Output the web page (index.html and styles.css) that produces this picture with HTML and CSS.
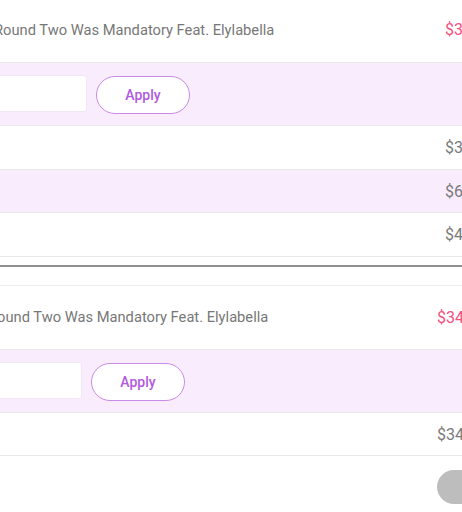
FILE: index.html
```html
<!DOCTYPE html>
<html lang="en">
<head>
<meta charset="utf-8">
<title>Cart</title>
<link rel="stylesheet" href="styles.css">
</head>
<body>
<div class="page">
  <section class="cart cart-a">
    <div class="row row-title">
      <div class="label">Round Two Was Mandatory Feat. Elylabella</div>
      <div class="price price-pink">$34.99</div>
    </div>
    <div class="row row-coupon">
      <div class="coupon">
        <input class="coupon-input" type="text">
        <button class="apply">Apply</button>
      </div>
    </div>
    <div class="row row-sum h43">
      <div class="label"></div>
      <div class="price">$34.99</div>
    </div>
    <div class="row row-sum row-alt h42">
      <div class="label"></div>
      <div class="price">$6.99</div>
    </div>
    <div class="row row-sum h43">
      <div class="label"></div>
      <div class="price">$41.98</div>
    </div>
  </section>

  <hr class="divider">

  <section class="cart cart-b">
    <div class="row row-title title-b">
      <div class="label">Round Two Was Mandatory Feat. Elylabella</div>
      <div class="price price-pink">$34.99</div>
    </div>
    <div class="row row-coupon">
      <div class="coupon">
        <input class="coupon-input" type="text">
        <button class="apply">Apply</button>
      </div>
    </div>
    <div class="row row-sum h42">
      <div class="label"></div>
      <div class="price">$34.99</div>
    </div>
    <div class="actions">
      <div class="label"></div>
      <button class="checkout">Checkout</button>
    </div>
  </section>
</div>
</body>
</html>
```

FILE: styles.css
```css
* { box-sizing: border-box; }

html, body {
  margin: 0;
  padding: 0;
  background: #ffffff;
  overflow: hidden;
}

body {
  width: 462px;
  height: 512px;
  font-family: Roboto, "Noto Sans", Arial, sans-serif;
  color: #767676;
}

.page {
  width: 462px;
  overflow: hidden;
}

.cart {
  width: 640px;
}

.cart-a { margin-left: -6px; --label-w: 451px; }
.cart-b { margin-left: -12px; --label-w: 449px; border-top: 1px solid #eeeeee; }

.row {
  display: flex;
  align-items: center;
  border-bottom: 1px solid #e9e9e9;
}

.label {
  flex: 0 0 var(--label-w);
  font-size: 14.7px;
  color: #777777;
  white-space: nowrap;
}

.price {
  font-size: 16px;
  color: #7a7a7a;
  white-space: nowrap;
}

.price-pink { color: #f4517e; }

.row-title { height: 63px; padding-bottom: 3px; }
.title-b { height: 64px; padding-bottom: 1px; }

.row-coupon {
  height: 63px;
  background: #f9edfd;
}

.row-alt { background: #f9edfd; }

.h43 { height: 44px; }
.h42 { height: 43px; }

.coupon {
  display: flex;
  align-items: center;
  gap: 9px;
}

.coupon-input {
  width: 93px;
  height: 37px;
  margin: 0;
  border: 1px solid #f1e6f5;
  border-radius: 3px;
  background: #ffffff;
  margin-top: -1px;
}

.cart-b .coupon-input { width: 94px; }

.apply {
  width: 94px;
  height: 38px;
  margin: 1px 0 0;
  border: 1.5px solid #c98ae9;
  border-radius: 19px;
  background: #ffffff;
  color: #b15ae0;
  font-family: Roboto, "Noto Sans", Arial, sans-serif;
  font-size: 14px;
  font-weight: 500;
  padding: 0;
}

.divider {
  margin: 8px 0 18px;
  border: 0;
  height: 2px;
  background: #8f8f8f;
}

.actions {
  display: flex;
  padding-top: 14px;
}

.checkout {
  width: 140px;
  height: 34px;
  border: 0;
  border-radius: 17px;
  background: #bdbdbd;
  color: #bdbdbd;
  font-size: 14px;
  padding: 0;
}
```
